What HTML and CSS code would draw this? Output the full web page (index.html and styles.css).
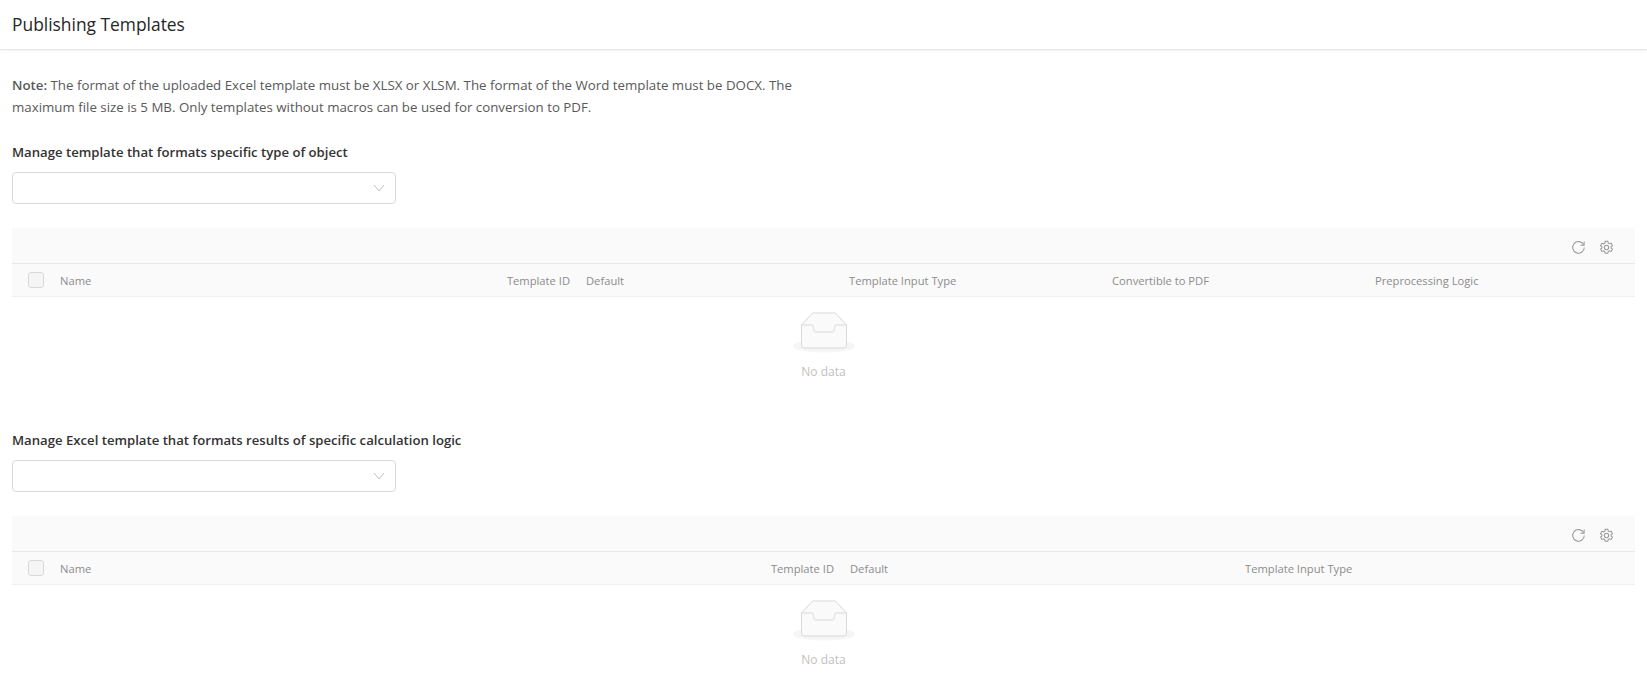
FILE: index.html
```html
<!DOCTYPE html>
<html lang="en">
<head>
<meta charset="utf-8">
<title>Publishing Templates</title>
<link rel="stylesheet" href="styles.css">
</head>
<body>
<header class="page-header"><h1>Publishing Templates</h1></header>
<main class="content">
  <p class="note"><b>Note:</b> The format of the uploaded Excel template must be XLSX or XLSM. The format of the Word template must be DOCX. The maximum file size is 5 MB. Only templates without macros can be used for conversion to PDF.</p>

  <section class="block">
    <h2 class="label">Manage template that formats specific type of object</h2>
    <div class="select"><svg class="chev" viewBox="0 0 12 8"><path d="M1 1l5 6 5-6"/></svg></div>
    <div class="table">
      <div class="toolbar">
        <svg class="tool" viewBox="0 0 16 16"><path d="M13.6 5.2A6.2 6.2 0 1 0 14.2 8"/><path d="M14 1.6v3.9h-3.9"/></svg>
        <svg class="tool" viewBox="0 0 16 16"><path d="M6.6 1.3h2.8l.4 1.9 1.3.7 1.8-.6 1.4 2.4-1.4 1.3v1.5l1.4 1.3-1.4 2.4-1.8-.6-1.3.7-.4 1.9H6.600l-.4-1.9-1.3-.7-1.8.6-1.4-2.4 1.400-1.300V7.200L1.700 5.900l1.400-2.400 1.800.6 1.300-.7z"/><circle cx="8" cy="8" r="2.300"/></svg>
      </div>
      <div class="row six">
        <span class="check-cell"><i class="check"></i></span>
        <span>Name</span><span class="right">Template ID</span><span class="after-id">Default</span><span>Template Input Type</span><span>Convertible to PDF</span><span>Preprocessing Logic</span>
      </div>
      <div class="empty">
        <svg class="inbox" viewBox="0 0 64 41"><ellipse cx="32" cy="34" rx="31" ry="6.500" fill="#f5f5f5"/><path class="box" d="M9.500 13 20.500 1h23l11 12v20a3 3 0 0 1-3 3h-39a3 3 0 0 1-3-3z"/><path class="box" d="M9.500 13h11c1 0 1 7 3 7h17c2 0 2-7 3-7h11"/></svg>
        <span class="empty-text">No data</span>
      </div>
    </div>
  </section>

  <section class="block second">
    <h2 class="label">Manage Excel template that formats results of specific calculation logic</h2>
    <div class="select"><svg class="chev" viewBox="0 0 12 8"><path d="M1 1l5 6 5-6"/></svg></div>
    <div class="table">
      <div class="toolbar">
        <svg class="tool" viewBox="0 0 16 16"><path d="M13.6 5.2A6.2 6.2 0 1 0 14.2 8"/><path d="M14 1.6v3.9h-3.9"/></svg>
        <svg class="tool" viewBox="0 0 16 16"><path d="M6.6 1.3h2.8l.4 1.9 1.3.7 1.8-.6 1.4 2.4-1.4 1.3v1.5l1.4 1.3-1.4 2.4-1.8-.6-1.3.7-.4 1.9H6.600l-.4-1.9-1.3-.7-1.8.6-1.4-2.4 1.400-1.300V7.200L1.700 5.900l1.400-2.400 1.800.6 1.300-.7z"/><circle cx="8" cy="8" r="2.300"/></svg>
      </div>
      <div class="row four">
        <span class="check-cell"><i class="check"></i></span>
        <span>Name</span><span class="right">Template ID</span><span class="after-id">Default</span><span>Template Input Type</span>
      </div>
      <div class="empty">
        <svg class="inbox" viewBox="0 0 64 41"><ellipse cx="32" cy="34" rx="31" ry="6.500" fill="#f5f5f5"/><path class="box" d="M9.500 13 20.500 1h23l11 12v20a3 3 0 0 1-3 3h-39a3 3 0 0 1-3-3z"/><path class="box" d="M9.500 13h11c1 0 1 7 3 7h17c2 0 2-7 3-7h11"/></svg>
        <span class="empty-text">No data</span>
      </div>
    </div>
  </section>
</main>
</body>
</html>
```
FILE: styles.css
```css
* { box-sizing: border-box; }
html, body { margin: 0; height: 700px; overflow: hidden; background: #fff; }
body { font-family: "Open Sans", "Noto Sans", sans-serif; font-size: 12px; color: #595959; }

.page-header {
  height: 50px;
  padding: 0 12px;
  display: flex;
  align-items: center;
  border-bottom: 1px solid #e8e8e8;
  box-shadow: 0 1px 3px rgba(0,0,0,.06);
}
.page-header h1 { margin: 0 0 1px; font-size: 17.4px; font-weight: 500; color: #262626; }

.content { padding: 24px 12px 0; }
.note { margin: 0 0 23px; width: 800px; font-size: 13.3px; line-height: 22px; color: #595959; }
.note b { font-weight: 600; }

.block.second { margin-top: 27px; }
.label { margin: 0 0 9px; font-size: 13.15px; line-height: 22px; font-weight: 600; color: #333; }

.select {
  width: 384px; height: 32px;
  border: 1px solid #d9d9d9; border-radius: 4px;
  display: flex; align-items: center; justify-content: flex-end;
  padding-right: 10px;
}
.chev { width: 12px; height: 8px; fill: none; stroke: #bfbfbf; stroke-width: 1; }

.table { margin-top: 24px; }
.toolbar {
  height: 36px;
  padding: 3px 21px 0 0;
  background: #fafafa;
  border-bottom: 1px solid #e8e8e8;
  display: flex; align-items: center; justify-content: flex-end; gap: 13px;
}
.tool { width: 15px; height: 15px; fill: none; stroke: #999; stroke-width: 1.1; }
.row {
  display: grid; align-items: center;
  height: 33px;
  font-size: 11.2px;
  white-space: nowrap;
  background: #fafafa;
  border-bottom: 1px solid #efefef;
  color: #8c8c8c;
}
.six { grid-template-columns: 48px 446px 64px 279px 263px 263px 1fr; }
.four { grid-template-columns: 48px 710px 64px 411px 1fr; }
.right { text-align: right; }
.after-id { padding-left: 16px; }
.check-cell { display: flex; padding-left: 16px; }
.check { width: 16px; height: 16px; border: 1px solid #d9d9d9; border-radius: 3px; background: #f5f5f5; }

.empty {
  height: 105px; padding-top: 15px;
  display: flex; flex-direction: column; align-items: center;
}
.inbox { width: 64px; height: 41px; }
.box { fill: #fafafa; stroke: #d9d9d9; stroke-width: 1; }
.empty-text { margin-top: 9px; line-height: 20px; color: #bfbfbf; }
```
